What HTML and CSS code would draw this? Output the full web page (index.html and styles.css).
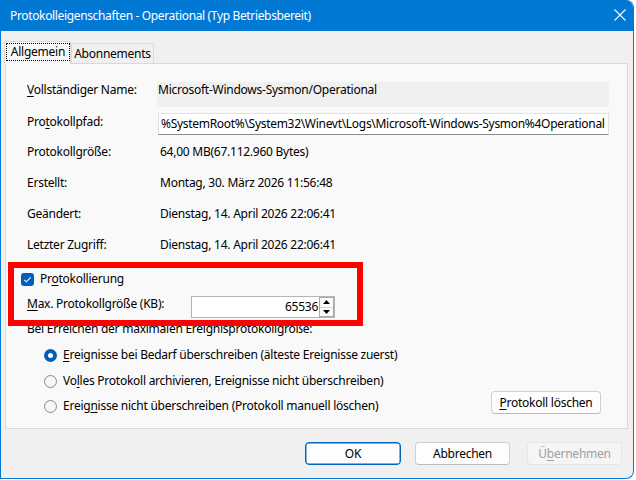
FILE: index.html
```html
<!DOCTYPE html>
<html lang="de">
<head>
<meta charset="utf-8">
<title>Protokolleigenschaften</title>
<link rel="stylesheet" href="styles.css">
</head>
<body>
<div class="window">
  <div class="titlebar">
    <span class="title">Protokolleigenschaften - Operational (Typ Betriebsbereit)</span>
    <svg class="close" width="12" height="12" viewBox="0 0 12 12"><path d="M0.5 0.5L11.5 11.5M11.5 0.5L0.5 11.5" stroke="#fff" stroke-width="1.1" fill="none"/></svg>
  </div>
  <div class="body">
    <div class="tabs">
      <div class="tab active"><span class="focus">Allgemein</span></div>
      <div class="tab">Abonnements</div>
    </div>
    <div class="panel">
      <div class="fields">
        <div class="row"><span class="label"><u>V</u>ollständiger Name:</span><span class="value readonly">Microsoft-Windows-Sysmon/Operational</span></div>
        <div class="row"><span class="label label-input">Pro<u>t</u>okollpfad:</span><span class="value input">%SystemRoot%\System32\Winevt\Logs\Microsoft-Windows-Sysmon%4Operational</span></div>
        <div class="row"><span class="label">Protokollgröße:</span><span class="value">64,00 MB(67.112.960 Bytes)</span></div>
        <div class="row"><span class="label">Erstellt:</span><span class="value">Montag, 30. März 2026 11:56:48</span></div>
        <div class="row"><span class="label">Geändert:</span><span class="value">Dienstag, 14. April 2026 22:06:41</span></div>
        <div class="row"><span class="label">Letzter Zugriff:</span><span class="value">Dienstag, 14. April 2026 22:06:41</span></div>
      </div>
      <div class="check-row">
        <span class="checkbox"><svg width="13" height="13" viewBox="0 0 13 13"><path d="M3.3 6.8L5.4 8.8L9.7 4.4" stroke="#fff" stroke-width="1.1" fill="none"/></svg></span>
        <span>Pr<u>o</u>tokollierung</span>
      </div>
      <div class="max-row">
        <span class="max-label"><u>M</u>ax. Protokollgröße (KB):</span>
        <div class="spin">
          <span class="num">65536</span>
          <div class="spinbtns">
            <span class="sb"><svg width="7" height="4" viewBox="0 0 7 4"><path d="M3.5 0L7 4H0Z" fill="#000"/></svg></span>
            <span class="sb"><svg width="7" height="4" viewBox="0 0 7 4"><path d="M0 0H7L3.5 4Z" fill="#000"/></svg></span>
          </div>
        </div>
      </div>
      <div class="hint">Bei Erreichen der maximalen Ereignisprotokollgröße:</div>
      <div class="radio-row"><span class="radio on"></span><span><u>E</u>reignisse bei Bedarf überschreiben (älteste Ereignisse zuerst)</span></div>
      <div class="radio-row"><span class="radio"></span><span>Vo<u>l</u>les Protokoll archivieren, Ereignisse nicht überschreiben)</span></div>
      <div class="last-row">
        <div class="radio-row radio-last"><span class="radio"></span><span>Ereig<u>n</u>isse nicht überschreiben (Protokoll manuell löschen)</span></div>
        <button class="btn clear"><u>P</u>rotokoll löschen</button>
      </div>
      <div class="highlight"></div>
    </div>
    <div class="actions">
      <button class="btn default">OK</button>
      <button class="btn">Abbrechen</button>
      <button class="btn disabled">Ü<u>b</u>ernehmen</button>
    </div>
  </div>
</div>
</body>
</html>
```
FILE: styles.css
```css
html, body {
  margin: 0;
  padding: 0;
  background: #ffffff;
}
body {
  font-family: "Noto Sans", "DejaVu Sans", sans-serif;
  font-size: 12px;
  line-height: 16px;
  letter-spacing: -0.25px;
  color: #000;
}
u {
  text-decoration-thickness: 1px;
  text-underline-offset: 2px;
}
.window {
  width: 634px;
  height: 479px;
  box-sizing: border-box;
  border: 1px solid #0078d4;
  border-top: none;
  border-radius: 0 8px 8px 0;
  overflow: hidden;
  background: #f0f0f0;
  display: flex;
  flex-direction: column;
}
.titlebar {
  height: 31px;
  flex: none;
  background: #0078d4;
  color: #fff;
  display: flex;
  align-items: center;
  padding: 0 7px 0 9px;
}
.title {
  letter-spacing: -0.35px;
}
.close {
  margin-left: auto;
  margin-top: -1px;
}
.body {
  flex: 1;
  display: flex;
  flex-direction: column;
  padding: 10px 5px 0 4px;
}
.tabs {
  display: flex;
  align-items: flex-end;
  height: 22px;
}
.tab {
  box-sizing: border-box;
  height: 20px;
  width: 83px;
  border: 1px solid #dcdcdc;
  border-bottom: none;
  background: #f0f0f0;
  text-align: center;
  line-height: 19px;
}
.tab.active {
  position: relative;
  z-index: 1;
  width: 67px;
  height: 23px;
  margin-left: -1px;
  margin-bottom: -1px;
  background: #f9f9f9;
  border-color: #d9d9d9;
  padding: 1px 0 0 1px;
  text-align: left;
}
.focus {
  display: block;
  box-sizing: border-box;
  width: 64px;
  height: 18px;
  border: 1px dotted #000;
  text-align: center;
  line-height: 16px;
}
.panel {
  position: relative;
  box-sizing: border-box;
  background: #f9f9f9;
  border: 1px solid #d9d9d9;
  padding: 18px 0 14px 21px;
}
.fields {
  display: grid;
  grid-template-columns: 130px 452px;
  grid-auto-rows: 31px;
}
.row {
  display: contents;
}
.label {
  align-self: start;
}
.label-input {
  padding-top: 1px;
}
.value {
  align-self: start;
  padding-left: 3px;
  white-space: nowrap;
}
.readonly {
  background: #f0f0f0;
  height: 25px;
  padding-left: 1px;
}
.input {
  box-sizing: border-box;
  margin-left: 1px;
  height: 22px;
  background: #fff;
  border: 1px solid #e2e2e2;
  border-bottom-color: #8a8a8a;
  padding-left: 2px;
  line-height: 20px;
  overflow: hidden;
  letter-spacing: -0.3px;
}
.check-row {
  display: flex;
  align-items: flex-start;
  margin: 3px 0 0 -6px;
  gap: 6px;
}
.checkbox {
  width: 13px;
  height: 13px;
  margin-top: 2px;
  border-radius: 3px;
  background: #005fb8;
  display: block;
}
.checkbox svg {
  display: block;
}
.max-row {
  display: flex;
  align-items: flex-start;
  margin-top: 9px;
}
.max-label {
  width: 164px;
}
.spin {
  box-sizing: border-box;
  width: 144px;
  height: 22px;
  border: 1px solid #b4b4b4;
  background: #fff;
  display: flex;
}
.num {
  flex: 1;
  text-align: right;
  padding-right: 1px;
  line-height: 20px;
}
.spinbtns {
  box-sizing: border-box;
  width: 15px;
  border: 1px solid #a9a9a9;
  display: flex;
  flex-direction: column;
}
.sb {
  flex: 1;
  display: flex;
  align-items: center;
  justify-content: center;
  background: #fcfcfc;
}
.sb + .sb {
  border-top: 1px solid #d6d6d6;
}
.sb svg {
  display: block;
}
.hint {
  margin-top: 3px;
}
.radio-row {
  display: flex;
  align-items: center;
  gap: 6px;
  margin-top: 10px;
  padding-left: 17px;
}
.radio {
  box-sizing: border-box;
  width: 13px;
  height: 13px;
  border-radius: 50%;
  border: 1px solid #8a8a8a;
  background: #f6f6f6;
}
.radio.on {
  border: 4px solid #005fb8;
  background: #fff;
}
.last-row {
  display: flex;
  align-items: flex-end;
  justify-content: space-between;
  margin-top: 2px;
  padding-right: 26px;
}
.radio-last {
  margin-top: 0;
}
.btn {
  box-sizing: border-box;
  height: 23px;
  width: 95px;
  padding: 0;
  font-family: inherit;
  font-size: 12px;
  line-height: 16px;
  letter-spacing: -0.25px;
  color: #000;
  background: #fdfdfd;
  border: 1px solid #d0d0d0;
  border-bottom-color: #bcbcbc;
  border-radius: 4px;
}
.btn.clear {
  width: 110px;
}
.btn.default {
  width: 96px;
  border: 1px solid #0067c0;
  box-shadow: inset 0 0 0 0.5px #0067c0;
}
.btn.disabled {
  color: #a0a0a0;
  background: #f5f5f5;
  border-color: #e5e5e5;
  margin-left: 3px;
}
.actions {
  display: flex;
  justify-content: flex-end;
  gap: 14px;
  padding: 13px 6px 0 0;
}
.highlight {
  position: absolute;
  left: 2px;
  top: 198px;
  width: 355px;
  height: 64px;
  box-sizing: border-box;
  border: 6px solid #ff0000;
  pointer-events: none;
}
```
